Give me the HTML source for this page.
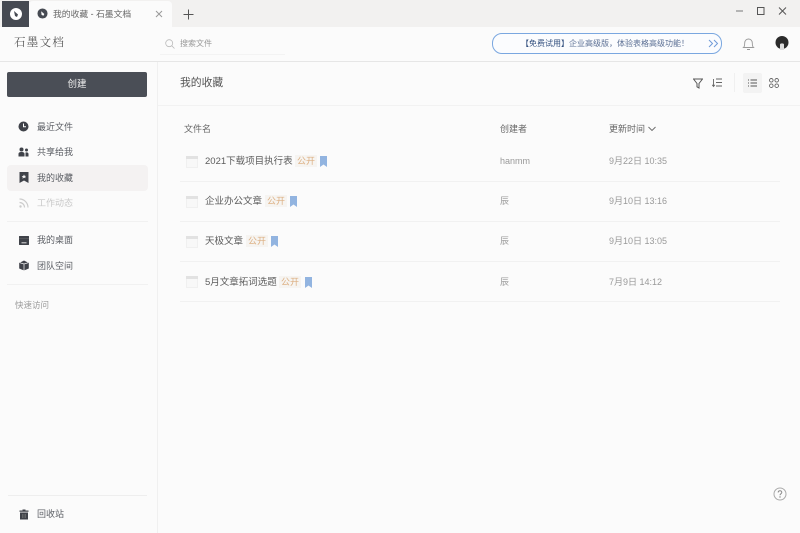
<!DOCTYPE html>
<html lang="zh">
<head>
<meta charset="utf-8">
<style>
html,body{margin:0;padding:0;width:800px;height:533px;overflow:hidden;background:#fbfbfb;}
body{font-family:"Liberation Sans","Noto Sans CJK SC",sans-serif;position:relative;color:#555;}
.a{position:absolute;white-space:nowrap;}
.t{font-size:9px;line-height:12px;}
.n{font-size:9.500px;line-height:12px;color:#5c5c5c;}
.nav{font-size:9px;line-height:12px;color:#5a5d63;left:37px;}
.hr{position:absolute;height:1px;background:#f1f1f1;}
.tag{position:absolute;width:22px;height:12px;background:#f6f4f1;color:#dcae80;font-size:9px;line-height:12px;text-align:center;}
svg{position:absolute;display:block;}
</style>
</head>
<body>
<!-- title bar -->
<div class="a" style="left:0;top:0;width:800px;height:27px;background:#f2f1f0;"></div>
<div class="a" style="left:2px;top:1px;width:27px;height:26px;background:#464a52;"></div>
<svg style="left:9px;top:7px" width="14" height="14" viewBox="0 0 14 14"><circle cx="7" cy="7" r="6" fill="#fff"/><path d="M5 4l4 3.500-1 2.500-2-1z" fill="#464a52"/></svg>
<div class="a" style="left:29px;top:1px;width:143px;height:26px;background:#fbfbfb;border-radius:4px 4px 0 0;"></div>
<svg style="left:37px;top:8px" width="11" height="11" viewBox="0 0 12 12"><circle cx="6" cy="6" r="5.500" fill="#464a52"/><path d="M4.500 3.500l3.500 3-1 2-2-1z" fill="#fff"/></svg>
<div class="a" style="left:53px;top:8px;font-size:8.800px;line-height:12px;color:#666;">我的收藏 - 石墨文档</div>
<svg style="left:155px;top:10px" width="8" height="8" viewBox="0 0 8 8"><path d="M1 1l6 6M7 1l-6 6" stroke="#999" stroke-width="1"/></svg>
<svg style="left:183px;top:9px" width="11" height="11" viewBox="0 0 11 11"><path d="M5.500 .5v10M.5 5.500h10" stroke="#555" stroke-width="1"/></svg>
<svg style="left:735px;top:6px" width="60" height="10" viewBox="0 0 60 10"><path d="M1 5h7" stroke="#777" stroke-width="1"/><rect x="22.500" y="1.500" width="6.500" height="7" fill="none" stroke="#555"/><path d="M44 1.500l7 7M51 1.500l-7 7" stroke="#555" stroke-width="1"/></svg>
<!-- header -->
<div class="a" style="left:14px;top:36px;font-family:'Liberation Serif','Noto Serif CJK SC',serif;font-size:11.500px;line-height:15px;letter-spacing:1.300px;color:#555;">石墨文档</div>
<svg style="left:165px;top:39px" width="10" height="10" viewBox="0 0 10 10"><circle cx="4.200" cy="4.200" r="3.500" fill="none" stroke="#bbb" stroke-width=".8"/><path d="M6.800 6.800L9.500 9.500" stroke="#bbb" stroke-width=".8"/></svg>
<div class="a" style="left:180px;top:38px;font-size:8px;line-height:11px;color:#999;">搜索文件</div>
<div class="hr" style="left:160px;top:54px;width:125px;background:#f3f3f3;"></div>
<div class="a" style="left:492px;top:33px;width:228px;height:19px;border:1px solid #7aa7e0;border-radius:10px;background:#fbfcfe;"></div>
<div class="a" style="left:521px;top:38px;font-size:8px;line-height:11px;color:#5b6f94;"><span style="color:#33507f">【免费试用】</span>企业高级版，体验表格高级功能！</div>
<svg style="left:708px;top:39px" width="12" height="9" viewBox="0 0 12 9"><path d="M1 1l3.500 3.500L1 8M6 1l3.500 3.500L6 8" fill="none" stroke="#6f9ad8" stroke-width="1"/></svg>
<svg style="left:742px;top:37px" width="13" height="14" viewBox="0 0 13 14"><path d="M1.500 10.500c1.200-1 1.200-2.500 1.200-4.500 0-2.300 1.500-4 3.800-4s3.800 1.700 3.800 4c0 2 0 3.500 1.200 4.500zM5 12.500h3" fill="none" stroke="#999" stroke-width=".9"/></svg>
<svg style="left:775px;top:35px" width="14" height="15" viewBox="0 0 14 15"><circle cx="7" cy="7.500" r="6.500" fill="#2b2b2b"/><path d="M5 15V9.500c0-1.500 4-1.500 4 0V15z" fill="#ddd"/></svg>
<div class="hr" style="left:0;top:61px;width:800px;background:#e6e6e6;"></div>
<!-- sidebar -->
<div class="a" style="left:157px;top:62px;width:1px;height:471px;background:#f0f0f0;"></div>
<div class="a" style="left:7px;top:72px;width:140px;height:25px;background:#4a4e56;border-radius:2px;color:#eee;font-size:9.500px;line-height:25px;text-align:center;">创建</div>

<svg style="left:18px;top:121px" width="11" height="11" viewBox="0 0 11 11"><circle cx="5.500" cy="5.500" r="5" fill="#3f4249"/><path d="M5.500 2.500v3.300h2.500" fill="none" stroke="#fff" stroke-width="1"/></svg>
<div class="a nav" style="top:121px;">最近文件</div>
<svg style="left:18px;top:147px" width="11" height="10" viewBox="0 0 11 10"><circle cx="3.500" cy="2.500" r="2" fill="#3f4249"/><path d="M.5 9.500V7c0-1.500 1-2 3-2s3 .5 3 2v2.500z" fill="#3f4249"/><circle cx="8.500" cy="3" r="1.500" fill="#3f4249"/><path d="M7.500 9.500V5.500c2-.5 3 .3 3 1.500v2.500z" fill="#3f4249"/></svg>
<div class="a nav" style="top:146px;">共享给我</div>
<div class="a" style="left:7px;top:165px;width:141px;height:26px;background:#f4f2f2;border-radius:4px;"></div>
<svg style="left:19px;top:172px" width="10" height="11" viewBox="0 0 10 11"><path fill-rule="evenodd" d="M.5 0h9v11L5 8.500.5 11zM5 2.500l-.8 1.500-1.500.2 1.100 1.100-.3 1.500L5 5.600l1.500.7-.3-1.500 1.100-1.100L5.800 4z" fill="#3f4249"/></svg>
<div class="a nav" style="top:172px;">我的收藏</div>
<svg style="left:19px;top:198px" width="10" height="10" viewBox="0 0 10 10"><circle cx="1.500" cy="8.500" r="1.200" fill="#ccc"/><path d="M.5 4.500c2.800 0 5 2.200 5 5M.5 1c4.700 0 8.500 3.800 8.500 8.500" fill="none" stroke="#ccc" stroke-width="1.200"/></svg>
<div class="a nav" style="top:197px;color:#c8c8c8;">工作动态</div>
<div class="hr" style="left:7px;top:221px;width:141px;"></div>
<svg style="left:19px;top:236px" width="10" height="9" viewBox="0 0 10 9"><rect width="10" height="9" rx=".5" fill="#3f4249"/><path d="M0 2.500h10" stroke="#777" stroke-width=".4"/><path d="M2.500 6.800h5" stroke="#ddd" stroke-width="1"/></svg>
<div class="a nav" style="top:234px;">我的桌面</div>
<svg style="left:19px;top:260px" width="10" height="11" viewBox="0 0 10 11"><path d="M5 .5L9.800 3v5.500L5 10.500.2 8.500V3z" fill="#3f4249"/><path d="M5 4v6.500M1 2.800L5 4l4-1.200" fill="none" stroke="#fff" stroke-width=".7"/></svg>
<div class="a nav" style="top:260px;">团队空间</div>
<div class="hr" style="left:7px;top:284px;width:141px;"></div>
<div class="a" style="left:15px;top:299px;font-size:8.500px;line-height:12px;color:#9a9a9a;">快速访问</div>
<div class="hr" style="left:8px;top:495px;width:139px;background:#eee;"></div>
<svg style="left:19px;top:509px" width="10" height="11" viewBox="0 0 10 11"><path d="M3.500 .5h3v1h3v1.200H.5V1.500h3zM1 3.500h8V10.500H1z" fill="#3f4249"/><path d="M3.500 5v4M5 5v4M6.500 5v4" stroke="#888" stroke-width=".5"/></svg>
<div class="a nav" style="top:508px;">回收站</div>
<!-- main -->
<div class="a" style="left:180px;top:76px;font-size:10.800px;line-height:14px;color:#555;">我的收藏</div>
<svg style="left:693px;top:78px" width="10" height="11" viewBox="0 0 10 11"><path d="M.5 1h9L6 5.500V10L4 8.800V5.500z" fill="none" stroke="#555" stroke-width="1"/></svg>
<svg style="left:712px;top:78px" width="10" height="10" viewBox="0 0 10 10"><path d="M1.500 1v7M.2 6.800L1.500 8.500 2.800 6.800M4 1h6M4 4.500h6M4 8h6" fill="none" stroke="#666" stroke-width=".9"/></svg>
<div class="a" style="left:734px;top:73px;width:1px;height:19px;background:#f0f0f0;"></div>
<div class="a" style="left:743px;top:73px;width:19px;height:20px;background:#f3f3f3;border-radius:2px;"></div>
<svg style="left:748px;top:79px" width="9" height="8" viewBox="0 0 9 8"><path d="M0 1h1M2.500 1H9M0 4h1M2.500 4H9M0 7h1M2.500 7H9" stroke="#555" stroke-width="1"/></svg>
<svg style="left:769px;top:78px" width="10" height="10" viewBox="0 0 10 10"><g fill="none" stroke="#666" stroke-width=".9"><circle cx="2.300" cy="2.300" r="1.800"/><circle cx="7.700" cy="2.300" r="1.800"/><circle cx="2.300" cy="7.700" r="1.800"/><circle cx="7.700" cy="7.700" r="1.800"/></g></svg>
<div class="hr" style="left:158px;top:105px;width:642px;background:#f2f2f2;"></div>

<div class="a t" style="left:184px;top:123px;color:#666;">文件名</div>
<div class="a t" style="left:500px;top:123px;color:#666;">创建者</div>
<div class="a t" style="left:609px;top:123px;color:#666;">更新时间</div>
<svg style="left:648px;top:126px" width="8" height="6" viewBox="0 0 8 6"><path d="M.5 1L4 4.500 7.500 1" fill="none" stroke="#666" stroke-width=".9"/></svg>

<!-- rows -->
<svg style="left:186px;top:156px" width="12" height="12" viewBox="0 0 12 12"><rect x=".5" y=".5" width="11" height="11" fill="#f8f8f8" stroke="#f0f0f0"/><rect width="12" height="3" fill="#e2e2e2"/></svg>
<div class="a n" style="left:205px;top:156px;">2021下载项目执行表</div>
<div class="tag" style="left:295px;top:155px;">公开</div>
<svg style="left:320px;top:156px" width="7" height="11" viewBox="0 0 7 11"><path d="M0 0h7v11L3.500 8.500 0 11z" fill="#92b4e0"/></svg>
<div class="a t" style="left:500px;top:155px;color:#999;">hanmm</div>
<div class="a t" style="left:609px;top:155px;color:#999;">9月22日 10:35</div>
<div class="hr" style="left:180px;top:181px;width:600px;"></div>

<svg style="left:186px;top:196px" width="12" height="12" viewBox="0 0 12 12"><rect x=".5" y=".5" width="11" height="11" fill="#f8f8f8" stroke="#f0f0f0"/><rect width="12" height="3" fill="#e2e2e2"/></svg>
<div class="a n" style="left:205px;top:196px;">企业办公文章</div>
<div class="tag" style="left:265px;top:195px;">公开</div>
<svg style="left:290px;top:196px" width="7" height="11" viewBox="0 0 7 11"><path d="M0 0h7v11L3.500 8.500 0 11z" fill="#92b4e0"/></svg>
<div class="a t" style="left:500px;top:195px;color:#999;">辰</div>
<div class="a t" style="left:609px;top:195px;color:#999;">9月10日 13:16</div>
<div class="hr" style="left:180px;top:221px;width:600px;"></div>

<svg style="left:186px;top:236px" width="12" height="12" viewBox="0 0 12 12"><rect x=".5" y=".5" width="11" height="11" fill="#f8f8f8" stroke="#f0f0f0"/><rect width="12" height="3" fill="#e2e2e2"/></svg>
<div class="a n" style="left:205px;top:236px;">天极文章</div>
<div class="tag" style="left:246px;top:235px;">公开</div>
<svg style="left:271px;top:236px" width="7" height="11" viewBox="0 0 7 11"><path d="M0 0h7v11L3.500 8.500 0 11z" fill="#92b4e0"/></svg>
<div class="a t" style="left:500px;top:235px;color:#999;">辰</div>
<div class="a t" style="left:609px;top:235px;color:#999;">9月10日 13:05</div>
<div class="hr" style="left:180px;top:261px;width:600px;"></div>

<svg style="left:186px;top:276px" width="12" height="12" viewBox="0 0 12 12"><rect x=".5" y=".5" width="11" height="11" fill="#f8f8f8" stroke="#f0f0f0"/><rect width="12" height="3" fill="#e2e2e2"/></svg>
<div class="a n" style="left:205px;top:277px;">5月文章拓词选题</div>
<div class="tag" style="left:279px;top:276px;">公开</div>
<svg style="left:305px;top:277px" width="7" height="11" viewBox="0 0 7 11"><path d="M0 0h7v11L3.500 8.500 0 11z" fill="#92b4e0"/></svg>
<div class="a t" style="left:500px;top:276px;color:#999;">辰</div>
<div class="a t" style="left:609px;top:276px;color:#999;">7月9日 14:12</div>
<div class="hr" style="left:180px;top:301px;width:600px;"></div>

<svg style="left:773px;top:487px" width="14" height="14" viewBox="0 0 14 14"><circle cx="7" cy="7" r="6" fill="none" stroke="#aaa" stroke-width="1"/><path d="M5.200 5.500c0-2.300 3.600-2.300 3.600-.1 0 1.400-1.800 1.400-1.800 2.900" fill="none" stroke="#888" stroke-width="1"/><circle cx="7" cy="10" r=".7" fill="#888"/></svg>
</body>
</html>
